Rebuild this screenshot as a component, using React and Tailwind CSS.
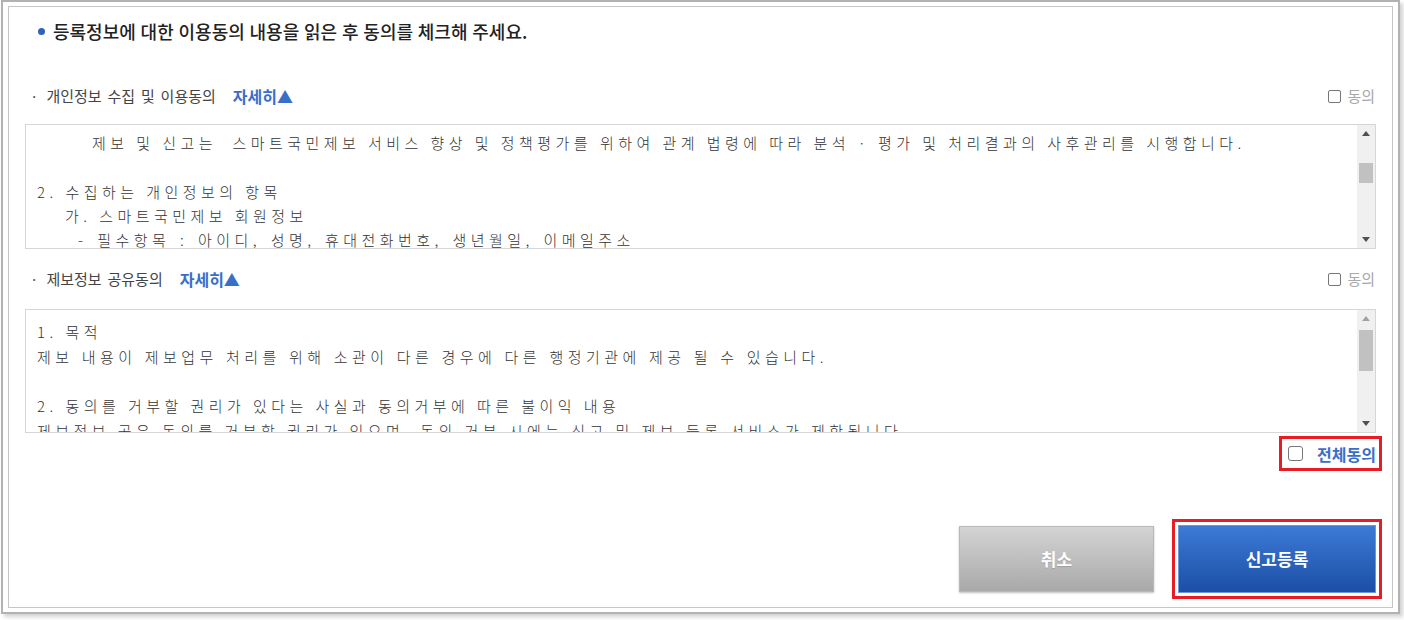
import React from "react";

const taFont = "font-['Noto_Sans_CJK_KR',sans-serif] text-[15px] font-light text-[#333] tracking-[4.45px] whitespace-pre";

function Scrollbar({ thumbTop, thumbH, upLight }) {
  return (
    <div className="w-[18px] bg-[#f0f0f0] flex flex-col items-center shrink-0">
      <div className="h-[17px] w-full flex items-center justify-center">
        <svg width="8" height="5" viewBox="0 0 8 5">
          <path d="M0 5 L4 0 L8 5 Z" fill={upLight ? "#a3a3a3" : "#505050"} />
        </svg>
      </div>
      <div className="flex-1 w-full px-[2px]">
        <div className="bg-[#c1c1c1] w-full" style={{ marginTop: thumbTop, height: thumbH }} />
      </div>
      <div className="h-[17px] w-full flex items-center justify-center">
        <svg width="8" height="5" viewBox="0 0 8 5">
          <path d="M0 0 L8 0 L4 5 Z" fill="#505050" />
        </svg>
      </div>
    </div>
  );
}

function Agree() {
  return (
    <label className="flex items-center gap-[6px]">
      <span className="w-[13px] h-[13px] border border-[#767676] rounded-[2px] bg-white" />
      <span className="text-[15px] text-[#a8a8a8]">동의</span>
    </label>
  );
}

function Label({ text }) {
  return (
    <div className="h-[32px] flex items-center justify-between pl-[21px] pr-[17px]">
      <div className="flex items-center">
        <span className="text-[15px] text-[#555]">·</span>
        <span className="ml-[8px] text-[15px] text-[#444] [word-spacing:2.5px]">{text}</span>
        <span className="ml-[17px] text-[16px] font-bold text-[#3a6fc9]">자세히▲</span>
      </div>
      <Agree />
    </div>
  );
}

export default function App() {
  return (
    <div className="w-[1404px] h-[620px] bg-white font-['Noto_Sans_CJK_KR',sans-serif]">
      <div className="ml-[1px] w-[1399px] h-[614px] border-2 border-[#b2b2b2] bg-white pt-[4px] pl-[5px] pr-[5px] pb-[4px] shadow-[3px_3px_4px_rgba(0,0,0,0.18)]">
        <div className="w-full h-full border border-[#c6c6c6]">
          {/* heading */}
          <div className="h-[48px] flex items-center pl-[29px]">
            <span className="w-[7px] h-[7px] rounded-full bg-[#2e62c0]" />
            <span className="ml-[8px] text-[18px] font-medium text-[#222] [word-spacing:0.75px]">
              등록정보에 대한 이용동의 내용을 읽은 후 동의를 체크해 주세요.
            </span>
          </div>

          <div className="mt-[25px]">
            <Label text="개인정보 수집 및 이용동의" />
          </div>

          <div className="mt-[12px] ml-[16px] mr-[16px] h-[125px] border border-[#d6d6d6] flex">
            <div className={`flex-1 overflow-hidden pl-[11px] pt-[6px] leading-[24.3px] ${taFont}`}>
              <div className="pl-[55px]">제보 및 신고는  스마트국민제보 서비스 향상 및 정책평가를 위하여 관계 법령에 따라 분석 · 평가 및 처리결과의 사후관리를 시행합니다.</div>
              <div>&nbsp;</div>
              <div>2. 수집하는 개인정보의 항목</div>
              <div className="pl-[28px]">가. 스마트국민제보 회원정보</div>
              <div className="pl-[41px] [word-spacing:2px]">- 필수항목 : 아이디, 성명, 휴대전화번호, 생년월일, 이메일주소</div>
            </div>
            <Scrollbar thumbTop={21} thumbH={20} />
          </div>

          <div className="mt-[14px]">
            <Label text="제보정보 공유동의" />
          </div>

          <div className="mt-[14px] ml-[16px] mr-[16px] h-[124px] border border-[#d6d6d6] flex">
            <div className={`flex-1 overflow-hidden pl-[11px] pt-[10px] leading-[24.8px] ${taFont}`}>
              <div>1. 목적</div>
              <div className="[word-spacing:0.5px]">제보 내용이 제보업무 처리를 위해 소관이 다른 경우에 다른 행정기관에 제공 될 수 있습니다.</div>
              <div>&nbsp;</div>
              <div>2. 동의를 거부할 권리가 있다는 사실과 동의거부에 따른 불이익 내용</div>
              <div>제보정보 공유 동의를 거부할 권리가 있으며, 동의 거부 시에는 신고 및 제보 등록 서비스가 제한됩니다.</div>
            </div>
            <Scrollbar thumbTop={3} thumbH={41} upLight />
          </div>

          {/* 전체동의 */}
          <div className="mt-[3px] flex justify-end pr-[10px]">
            <div className="h-[35px] border-[3px] border-[#e81c24] flex items-center pl-[6px] pr-[3px]">
              <span className="w-[15px] h-[15px] border border-[#767676] rounded-[3px] bg-white" />
              <span className="ml-[14px] text-[16px] font-bold text-[#3a6fc9]">전체동의</span>
            </div>
          </div>

          {/* buttons */}
          <div className="mt-[48px] flex justify-end items-center pr-[10px]">
            <button className="w-[195px] h-[66px] border border-[#b8b8b8] bg-gradient-to-b from-[#d4d4d4] to-[#a9a9a9] text-white text-[17px] font-bold [text-shadow:0_1px_1px_rgba(0,0,0,0.15)] shadow-[0_1px_2px_rgba(0,0,0,0.25)]">
              취소
            </button>
            <div className="ml-[18px] h-[80px] border-[3px] border-[#e81c24] p-[3px] flex">
              <button className="w-[198px] h-full border border-[#6b97dc] bg-gradient-to-b from-[#3d7ad6] to-[#1c4fa6] text-white text-[17px] font-bold">
                신고등록
              </button>
            </div>
          </div>
        </div>
      </div>
    </div>
  );
}
